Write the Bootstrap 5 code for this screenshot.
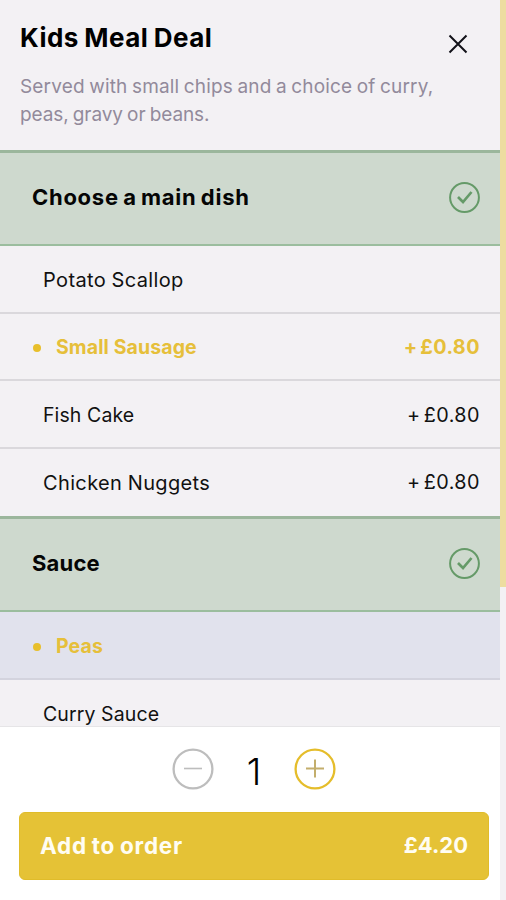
<!DOCTYPE html>
<html lang="en">
<head>
<meta charset="utf-8">
<meta name="viewport" content="width=device-width, initial-scale=1">
<title>Kids Meal Deal</title>
<link href="https://cdn.jsdelivr.net/npm/bootstrap@5.3.0/dist/css/bootstrap.min.css" rel="stylesheet">
<style>
body{font-family:Inter,"Liberation Sans",sans-serif;background:#f3f1f4;color:#111;height:900px;overflow:hidden}
.sheet{width:500px;height:900px}
.side{width:6px;height:587px;background:#eddda0}
.sheet-head{height:150px;padding:21px 20px 0}
.title{font-size:26px;line-height:34px;font-weight:650;letter-spacing:.5px;word-spacing:-1.3px;color:#000}
.desc{font-size:19px;line-height:28px;color:#928a9b;margin-top:18px;white-space:nowrap;letter-spacing:.16px;word-spacing:-1px}
.desc .tail{letter-spacing:-.1px}
.close-btn{margin:13px 12px 0 0;width:20px;height:20px}
.group-head{height:96px;flex:none;background:#ced9ce;border-top:3px solid #9bb69c;border-bottom:2px solid #9bbd9e;padding:0 20px 2px 32px;font-size:22px;font-weight:650;letter-spacing:.72px;word-spacing:-1.5px;color:#050505}
.group-head svg{width:31px;height:31px}
.group-head .short{letter-spacing:.2px}
.opt{height:67.6px;flex:none;border-bottom:2px solid #dad8dc;padding:3px 20.5px 0 43px;font-size:19.5px;letter-spacing:.1px}
.opt .wide{letter-spacing:.36px;font-size:20px;word-spacing:-.5px}
.opt .price{letter-spacing:.4px;word-spacing:-2.5px;font-size:19.8px;margin-right:-.4px}
.opt.last{border-bottom-color:transparent}
.opt.picked{padding-left:33px;color:#e6bf3a;font-weight:700}
.opt.tinted{padding-top:2px;background:#e1e2ed;border-bottom-color:#d3d3de}
.dot{width:8px;height:8px;background:#e8bf2b;margin:1px 15px 0 0}
.options{height:576px}
.foot{height:174px;border-top:1px solid #e6e5e7}
.qty{height:85px;gap:32px;padding-bottom:2px;margin-left:8px}
.qty svg{width:42px;height:42px}
.qty-num{font-size:37px;line-height:42px;font-weight:300;width:16px;color:#000;padding-top:6px}
.order-btn{margin:0 11px 0 19px;height:68px;background:#e5c236;border:1px solid #e0bc2a;border-radius:6px;padding:0 20px 1px;color:#fffdf2;font-size:22px;font-weight:700}
.order-btn:hover{background:#e5c236;color:#fffdf2}
.order-label{font-size:22.5px;letter-spacing:.75px;word-spacing:-1.2px}
</style>
</head>
<body>
<div class="d-flex">
<main class="sheet d-flex flex-column flex-shrink-0">
  <header class="sheet-head d-flex justify-content-between align-items-start">
    <div>
      <h1 class="title m-0">Kids Meal Deal</h1>
      <p class="desc mb-0">Served with small chips and a choice of curry,<br><span class="tail">peas, gravy or beans.</span></p>
    </div>
    <button class="close-btn btn p-0 border-0 d-flex flex-shrink-0" aria-label="Close"><svg width="20" height="20" viewBox="0 0 20 20" fill="none" stroke="#111118" stroke-width="2"><path d="M1.5 1.5 18.5 18.5M18.5 1.5 1.5 18.5"/></svg></button>
  </header>
  <div class="options d-flex flex-column overflow-hidden">
    <div class="group-head d-flex align-items-center justify-content-between"><span>Choose a main dish</span>
      <svg viewBox="0 0 31 31" fill="none" stroke="#659a68"><circle cx="15.5" cy="15.5" r="14.4" stroke-width="2"/><path d="M9 15l5 5 8.5-10" stroke-width="2.7"/></svg></div>
    <div class="opt d-flex align-items-center justify-content-between"><span class="wide">Potato Scallop</span></div>
    <div class="opt picked d-flex align-items-center"><i class="dot rounded-circle"></i><span>Small Sausage</span><span class="price ms-auto">+ £0.80</span></div>
    <div class="opt d-flex align-items-center justify-content-between"><span>Fish Cake</span><span class="price">+ £0.80</span></div>
    <div class="opt last d-flex align-items-center justify-content-between"><span class="wide">Chicken Nuggets</span><span class="price">+ £0.80</span></div>
    <div class="group-head d-flex align-items-center justify-content-between"><span class="short">Sauce</span>
      <svg viewBox="0 0 31 31" fill="none" stroke="#659a68"><circle cx="15.5" cy="15.5" r="14.4" stroke-width="2"/><path d="M9 15l5 5 8.5-10" stroke-width="2.7"/></svg></div>
    <div class="opt picked tinted d-flex align-items-center"><i class="dot rounded-circle"></i><span>Peas</span></div>
    <div class="opt d-flex align-items-center"><span>Curry Sauce</span></div>
  </div>
  <footer class="foot bg-white">
    <div class="qty d-flex align-items-center justify-content-center">
      <svg viewBox="0 0 42 42" fill="none" stroke="#bdbdbd"><circle cx="21" cy="21" r="19.4" stroke-width="2.3"/><path d="M12 20.5h18" stroke-width="1.6"/></svg>
      <span class="qty-num text-center">1</span>
      <svg viewBox="0 0 42 42" fill="none" stroke="#e5bd2b"><circle cx="21" cy="21" r="19.4" stroke-width="2.3"/><path d="M12 20.5h18M21 11.5v18" stroke="#c3ae6c" stroke-width="2"/></svg>
    </div>
    <div class="d-grid"><button class="order-btn btn d-flex align-items-center justify-content-between"><span class="order-label">Add to order</span><span>£4.20</span></button></div>
  </footer>
</main>
<div class="side"></div>
</div>
<script src="https://cdn.jsdelivr.net/npm/bootstrap@5.3.0/dist/js/bootstrap.bundle.min.js"></script>
</body>
</html>
